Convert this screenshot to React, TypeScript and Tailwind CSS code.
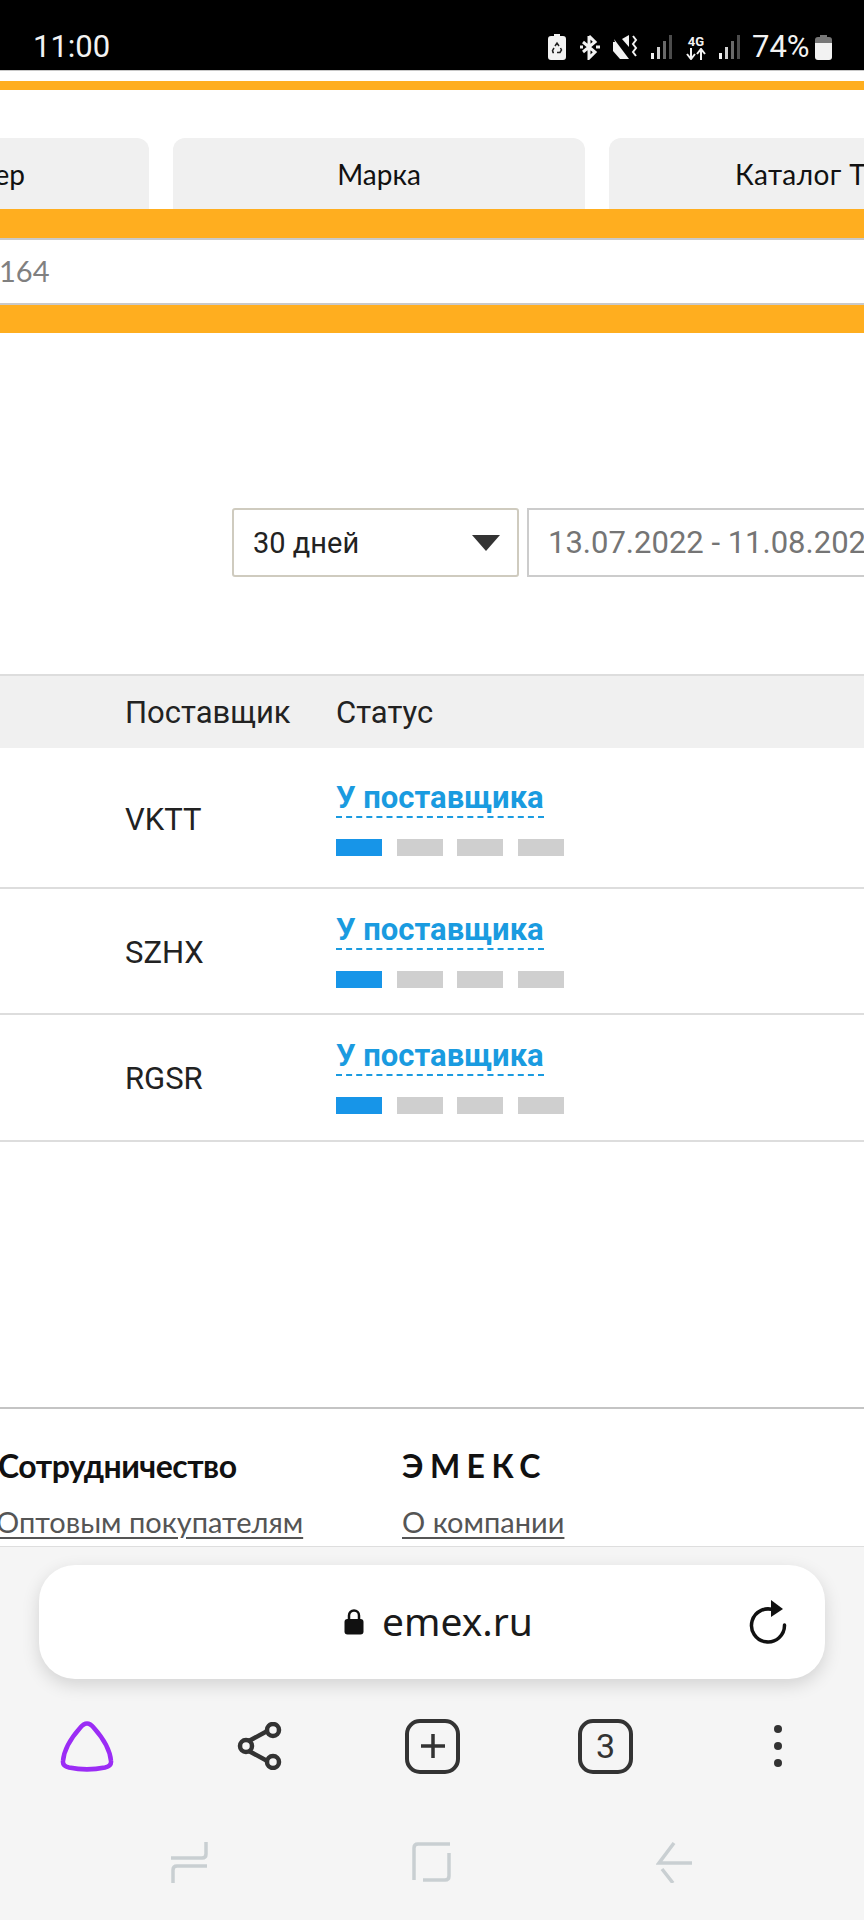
const rows = [
  { supplier: "VKTT", height: "h-[141px]", pad: "pt-[26px]" },
  { supplier: "SZHX", height: "h-[126px]", pad: "pt-[18px]" },
  { supplier: "RGSR", height: "h-[127px]", pad: "pt-[18px]" },
];

function Signal() {
  return (
    <svg width="22" height="26" viewBox="0 0 22 26">
      <rect x="0" y="19" width="3" height="6" fill="#f2f2f2" />
      <rect x="6" y="13" width="3" height="12" fill="#d0d0d0" />
      <rect x="12" y="7" width="3" height="18" fill="#6a6a6a" />
      <rect x="18" y="1" width="3" height="24" fill="#4c4c4c" />
    </svg>
  );
}

function StatusBar() {
  return (
    <div className="h-[71px] shrink-0 bg-black border-b border-[#c8c8c8] flex items-end justify-between pl-[33px] pr-[32px] pb-[5px] text-[#f2f2f2] font-['Roboto',sans-serif]">
      <span className="text-[31px] leading-[36px]">11:00</span>
      <div className="flex items-center h-[36px]">
        {/* power saving */}
        <svg width="18" height="26" viewBox="0 0 18 26">
          <path d="M6 0h6v2h3a3 3 0 0 1 3 3v18a3 3 0 0 1-3 3H3a3 3 0 0 1-3-3V5a3 3 0 0 1 3-3h3z" fill="#f2f2f2" />
          <path d="M7 12l2-3 2 3M12.500 14l1 2-1.500 2.500H9M6 18.500H5l-.5-2 1.500-2.500" fill="none" stroke="#222" strokeWidth="1.500" />
        </svg>
        {/* bluetooth */}
        <svg width="22" height="26" viewBox="0 0 22 26" className="ml-[13px]">
          <path d="M10 2v22l6-6L4 8M10 2l6 6L4 18" fill="none" stroke="#f2f2f2" strokeWidth="3" />
          <path d="M1 13h3M17 13h4" stroke="#f2f2f2" strokeWidth="3" />
        </svg>
        {/* vibrate/mute */}
        <svg width="25" height="26" viewBox="0 0 25 26" className="ml-[12px]">
          <path d="M1 5l15 20H7L0 17V8h2z" fill="#f2f2f2" />
          <path d="M9 5l7-4v12z" fill="#f2f2f2" />
          <path d="M20 2l3 4-3 4 3 4-3 4 3 4" fill="none" stroke="#f2f2f2" strokeWidth="2" />
        </svg>
        <div className="ml-[13px]"><Signal /></div>
        <div className="ml-[13px] w-[20px] flex flex-col items-center">
          <span className="text-[13px] leading-[13px] font-bold">4G</span>
          <svg width="20" height="12" viewBox="0 0 20 12">
            <path d="M5 0v10M1 6l4 5 4-5M15 12V2M11 6l4-5 4 5" fill="none" stroke="#f2f2f2" strokeWidth="2" />
          </svg>
        </div>
        <div className="ml-[13px]"><Signal /></div>
        <span className="ml-[11px] text-[31px] leading-[36px] w-[60px]">74%</span>
        <div className="ml-[3px] w-[17px] h-[25px] flex flex-col items-center">
          <div className="w-[7px] h-[2px] bg-[#777]" />
          <div className="w-[17px] h-[6px] bg-[#777] rounded-t-[3px]" />
          <div className="w-[17px] h-[17px] bg-[#f2f2f2] rounded-b-[3px]" />
        </div>
      </div>
    </div>
  );
}

function Tabs() {
  return (
    <div className="mt-[48px] h-[71px] flex items-stretch gap-[24px] overflow-hidden font-['Lato',sans-serif] text-[28px] text-[#111]">
      <div className="w-[149px] shrink-0 bg-[#f0f0f0] rounded-tr-[12px] flex items-center justify-end pr-[124px]">
        <span className="leading-[34px]">ер</span>
      </div>
      <div className="w-[412px] shrink-0 bg-[#f0f0f0] rounded-t-[12px] flex items-center justify-center">Марка</div>
      <div className="w-[300px] shrink-0 bg-[#f0f0f0] rounded-tl-[12px] flex items-center pl-[126px] whitespace-nowrap tracking-[0.4px]">Каталог ТО</div>
    </div>
  );
}

function Filters() {
  return (
    <div className="mt-[175px] pl-[232px] flex gap-[8px] h-[69px] font-['Roboto',sans-serif] overflow-hidden">
      <div className="w-[287px] shrink-0 border-2 border-[#cfcbbf] rounded-[3px] flex items-center justify-between pl-[19px] pr-[17px] pt-[3px] text-[#222] text-[29px]">
        <span>30 дней</span>
        <svg width="28" height="16" viewBox="0 0 28 16" className="-mt-[3px]">
          <path d="M0 0h28L14 16z" fill="#333" />
        </svg>
      </div>
      <div className="w-[400px] shrink-0 border-2 border-[#cccccc] flex items-center pl-[19px] pt-[2px] text-[31px] text-[#757575] whitespace-nowrap">
        13.07.2022 - 11.08.2022
      </div>
    </div>
  );
}

function OrdersTable() {
  return (
    <div className="mt-[97px] font-['Roboto',sans-serif] text-[31px] text-[#222]">
      <div className="h-[74px] bg-[#f0f0f0] border-t-2 border-[#dddddd] flex items-center pl-[125px]">
        <span className="w-[212px] pt-[3px]">Поставщик</span>
        <span className="-ml-[1px] pt-[3px]">Статус</span>
      </div>
      {rows.map((row, i) => (
        <div key={row.supplier} className={`${row.height} ${i === 0 ? "pt-[1px]" : ""} border-b-2 border-[#dddddd] flex items-center pl-[125px]`}>
          <span className="w-[211px] pt-[4px]">{row.supplier}</span>
          <div className={`self-start ${row.pad}`}>
            <div className="inline-block font-bold text-[#1a9be0] leading-[37px] border-b-2 border-dashed border-[#1a9be0]">
              У поставщика
            </div>
            <div className="mt-[17px] flex gap-[14.500px]">
              <div className="w-[46px] h-[17px] bg-[#1795e8]" />
              <div className="w-[46px] h-[17px] bg-[#cfcfcf]" />
              <div className="w-[46px] h-[17px] bg-[#cfcfcf]" />
              <div className="w-[46px] h-[17px] bg-[#cfcfcf]" />
            </div>
          </div>
        </div>
      ))}
    </div>
  );
}

function Footer() {
  return (
    <div className="mt-[265px] border-t-2 border-[#c4c4c4] flex pt-[39px] font-['Lato',sans-serif]">
      <div className="w-[404px] shrink-0 -ml-[2px]">
        <div className="text-[32px] font-bold leading-[36px] text-[#111] tracking-[-0.5px]">Сотрудничество</div>
        <div className="mt-[20px] text-[29px] leading-[36px] text-[#555] underline underline-offset-4 whitespace-nowrap -ml-[2px]">Оптовым покупателям</div>
      </div>
      <div>
        <div className="text-[32px] font-bold leading-[36px] text-[#111] tracking-[6.500px]">ЭМЕКС</div>
        <div className="mt-[20px] text-[29px] leading-[36px] text-[#555] underline underline-offset-4">О компании</div>
      </div>
    </div>
  );
}

function BrowserBar() {
  return (
    <div className="h-[374px] shrink-0 bg-[#f5f5f5] border-t border-[#dedede] flex flex-col font-['Noto_Sans',sans-serif]">
      <div className="mt-[18px] mx-[39px] h-[114px] bg-white rounded-[36px] shadow-[0_6px_18px_rgba(0,0,0,0.14)] flex items-center pl-[305px] pr-[38px]">
        <svg width="20" height="26" viewBox="0 0 20 26">
          <path d="M5 11V6.500a5 5 0 0 1 10 0V11" fill="none" stroke="#111" strokeWidth="2.500" />
          <rect x="0.500" y="10" width="19" height="15.500" rx="3" fill="#111" />
        </svg>
        <span className="ml-[18px] text-[39px] leading-[46px] text-[#1a1a1a] -mt-[2px]">emex.ru</span>
        <svg width="38" height="44" viewBox="0 0 38 44" className="ml-auto">
          <path d="M26 10.500A16.500 16.500 0 1 0 35.500 25" fill="none" stroke="#111" strokeWidth="3.500" strokeLinecap="round" />
          <path d="M22 0l12 9-12 8z" fill="#111" />
        </svg>
      </div>
      <div className="mt-[39px] flex items-center h-[56px] text-[#333]">
        <svg width="54" height="51" viewBox="0 0 54 51" className="ml-[60px]">
          <path d="M27 2.500C30 2.500 32 4.500 34 7C42 16 50 28 51 40C51.500 44 49 45.500 45 46.500C33 49 21 49 9 46.500C5 45.500 2.500 44 3 40C4 28 12 16 20 7C22 4.500 24 2.500 27 2.500z" fill="none" stroke="#9b2cf5" strokeWidth="4.500" strokeLinejoin="round" />
        </svg>
        <svg width="46" height="48" viewBox="0 0 46 48" className="ml-[123px]">
          <path d="M10 20l24-13M10 28l24 13" stroke="#333" strokeWidth="4.500" />
          <circle cx="9" cy="24" r="6" fill="#f5f5f5" stroke="#333" strokeWidth="4.500" />
          <circle cx="36" cy="8" r="6" fill="#f5f5f5" stroke="#333" strokeWidth="4.500" />
          <circle cx="36" cy="40" r="6" fill="#f5f5f5" stroke="#333" strokeWidth="4.500" />
        </svg>
        <div className="ml-[122px] w-[55px] h-[55px] border-[4px] border-[#333] rounded-[15px] flex items-center justify-center">
          <svg width="28" height="28" viewBox="0 0 28 28">
            <path d="M14 2v24M2 14h24" stroke="#333" strokeWidth="3.500" />
          </svg>
        </div>
        <div className="ml-[118px] w-[55px] h-[55px] border-[4px] border-[#333] rounded-[15px] flex items-center justify-center font-['Roboto',sans-serif] text-[34px] leading-none">
          3
        </div>
        <div className="ml-[141px] flex flex-col gap-[9px]">
          <div className="w-[8px] h-[8px] rounded-full bg-[#333]" />
          <div className="w-[8px] h-[8px] rounded-full bg-[#333]" />
          <div className="w-[8px] h-[8px] rounded-full bg-[#333]" />
        </div>
      </div>
      {/* android nav */}
      <div className="mt-[67px] flex items-center h-[42px]">
        <svg width="37" height="42" viewBox="0 0 37 42" className="ml-[171px]" fill="none" stroke="#c9cfd2" strokeWidth="3.500">
          <path d="M35 1v12q0 4-4 4H0M36 25H6q-4 0-4 4v13" />
        </svg>
        <svg width="39" height="40" viewBox="0 0 39 40" className="ml-[204px]" fill="none" stroke="#c9cfd2" strokeWidth="3.500">
          <path d="M38 2H6Q2 2 2 6v32M37 11v23q0 4-4 4H11" />
        </svg>
        <svg width="36" height="41" viewBox="0 0 36 41" className="ml-[205px]" fill="none" stroke="#c9cfd2" strokeWidth="3.500">
          <path d="M18 1L3 21h33M6 27l11 14" />
        </svg>
      </div>
    </div>
  );
}

export default function App() {
  return (
    <div className="w-[864px] h-[1920px] overflow-hidden flex flex-col bg-white">
      <StatusBar />
      <div className="flex-1 min-h-0 overflow-hidden">
        <div className="mt-[10px] h-[9px] bg-[#ffae1f]" />
        <Tabs />
        <div className="h-[29px] bg-[#ffae1f]" />
        <div className="h-[67px] border-y-2 border-[#c9c9c9] flex items-center font-['Lato',sans-serif] text-[29px] text-[#808080]">
          <span className="-mt-[2px] -ml-[1px]">164</span>
        </div>
        <div className="h-[28px] bg-[#ffae1f]" />
        <Filters />
        <OrdersTable />
        <Footer />
      </div>
      <BrowserBar />
    </div>
  );
}
